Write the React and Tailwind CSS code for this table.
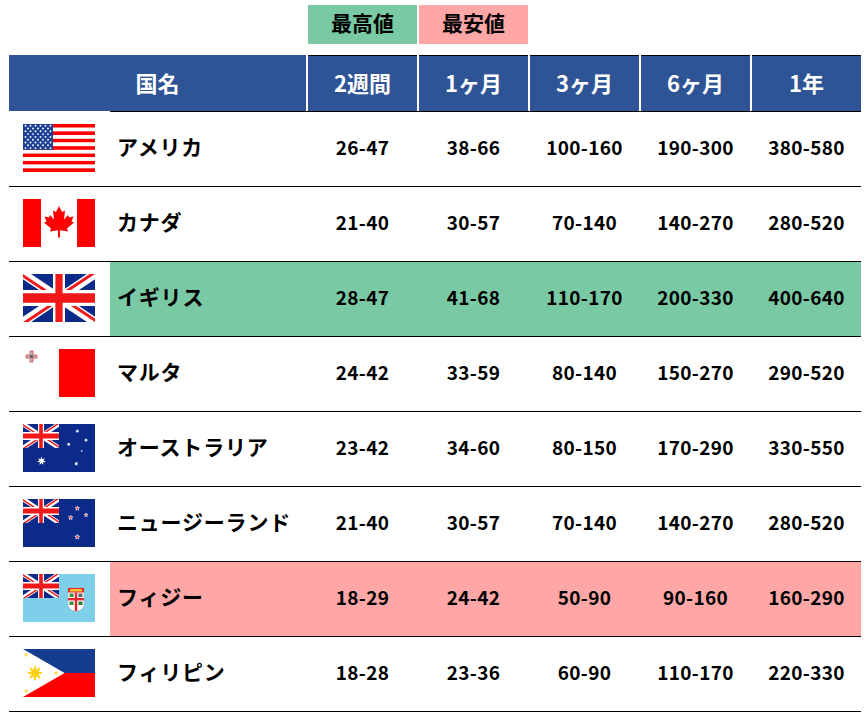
import React from 'react';

const GREEN = 'bg-[#79C9A5]';
const PINK = 'bg-[#FFA6A6]';

const headers = ['2週間', '1ヶ月', '3ヶ月', '6ヶ月', '1年'];

const rows = [
  { name: 'アメリカ', flag: 'us', v: ['26-47', '38-66', '100-160', '190-300', '380-580'] },
  { name: 'カナダ', flag: 'ca', v: ['21-40', '30-57', '70-140', '140-270', '280-520'] },
  { name: 'イギリス', flag: 'uk', v: ['28-47', '41-68', '110-170', '200-330', '400-640'], hl: GREEN },
  { name: 'マルタ', flag: 'mt', v: ['24-42', '33-59', '80-140', '150-270', '290-520'] },
  { name: 'オーストラリア', flag: 'au', v: ['23-42', '34-60', '80-150', '170-290', '330-550'] },
  { name: 'ニュージーランド', flag: 'nz', v: ['21-40', '30-57', '70-140', '140-270', '280-520'] },
  { name: 'フィジー', flag: 'fj', v: ['18-29', '24-42', '50-90', '90-160', '160-290'], hl: PINK },
  { name: 'フィリピン', flag: 'ph', v: ['18-28', '23-36', '60-90', '110-170', '220-330'] },
];

// star polygon points
function star(cx, cy, r, n = 5, inner = 0.42) {
  const pts = [];
  for (let i = 0; i < n * 2; i++) {
    const rr = i % 2 === 0 ? r : r * inner;
    const a = (Math.PI * i) / n - Math.PI / 2;
    pts.push(`${(cx + rr * Math.cos(a)).toFixed(2)},${(cy + rr * Math.sin(a)).toFixed(2)}`);
  }
  return pts.join(' ');
}

// union jack drawn into a box (x, y, w, h)
function UnionJack({ id, x = 0, y = 0, w = 72, h = 48 }) {
  return (
    <svg x={x} y={y} width={w} height={h} viewBox="0 0 60 30" preserveAspectRatio="none">
      <clipPath id={`t-${id}`}>
        <path d="M30,15 h30 v15 z v15 h-30 z h-30 v-15 z v-15 h30 z" />
      </clipPath>
      <rect width="60" height="30" fill="#0B2A8A" />
      <path d="M0,0 L60,30 M60,0 L0,30" stroke="#fff" strokeWidth="6" />
      <path d="M0,0 L60,30 M60,0 L0,30" clipPath={`url(#t-${id})`} stroke="#F01818" strokeWidth="4" />
      <path d="M30,0 v30 M0,15 h60" stroke="#fff" strokeWidth="10" />
      <path d="M30,0 v30 M0,15 h60" stroke="#F01818" strokeWidth="6" />
    </svg>
  );
}

function Flag({ code }) {
  const common = { width: 72, height: 48, viewBox: '0 0 72 48' };

  if (code === 'us') {
    const stripes = [];
    for (let i = 0; i < 13; i++) {
      stripes.push(
        <rect key={i} y={(48 / 13) * i} width="72" height={48 / 13 + 0.05} fill={i % 2 === 0 ? '#FF0000' : '#fff'} />
      );
    }
    const stars = [];
    for (let r = 0; r < 9; r++) {
      const n = r % 2 === 0 ? 6 : 5;
      for (let c = 0; c < n; c++) {
        const cx = r % 2 === 0 ? 2.5 + c * 5 : 5 + c * 5;
        stars.push(<circle key={`${r}-${c}`} cx={cx} cy={1.7 + r * 2.8} r="0.95" fill="#fff" />);
      }
    }
    return (
      <svg {...common}>
        {stripes}
        <rect width="30" height={(48 / 13) * 7} fill="#1C3F94" />
        {stars}
      </svg>
    );
  }

  if (code === 'ca') {
    const leaf = [
      [0, -17], [3, -11], [6, -12.5], [5, -3.5], [9, -8], [10, -5.5], [14.5, -6.5], [12.5, -1.5], [15, -0.5],
      [8, 5.5], [9, 8.5], [1, 7.2], [1, 14.5], [-1, 14.5], [-1, 7.2], [-9, 8.5], [-8, 5.5], [-15, -0.5],
      [-12.5, -1.5], [-14.5, -6.5], [-10, -5.5], [-9, -8], [-5, -3.5], [-6, -12.5], [-3, -11],
    ].map(([a, b]) => `${36 + a},${24 + b}`).join(' ');
    return (
      <svg {...common}>
        <rect width="72" height="48" fill="#fff" />
        <rect width="18" height="48" fill="#FF0000" />
        <rect x="54" width="18" height="48" fill="#FF0000" />
        <polygon points={leaf} fill="#FF0000" />
      </svg>
    );
  }

  if (code === 'uk') {
    return (
      <svg {...common}>
        <UnionJack id="uk" />
      </svg>
    );
  }

  if (code === 'mt') {
    return (
      <svg {...common}>
        <rect width="72" height="48" fill="#fff" />
        <rect x="36" width="36" height="48" fill="#FF0000" />
        <path d="M7,2 h3 v4 h4 v3 h-4 v4 h-3 v-4 h-4 v-3 h4 z" fill="#B8B8B8" stroke="#D44" strokeWidth="0.8" />
        <circle cx="8.5" cy="7.5" r="1.6" fill="#555" />
      </svg>
    );
  }

  if (code === 'au') {
    return (
      <svg {...common}>
        <rect width="72" height="48" fill="#0B2A8A" />
        <UnionJack id="au" w={36} h={24} />
        <polygon points={star(18.5, 37, 4.5, 7, 0.45)} fill="#fff" />
        <polygon points={star(54.3, 7, 2.1, 7, 0.45)} fill="#fff" />
        <polygon points={star(63, 16, 2.1, 7, 0.45)} fill="#fff" />
        <polygon points={star(45.7, 20.3, 2.1, 7, 0.45)} fill="#fff" />
        <polygon points={star(58.7, 27, 1.2, 5, 0.45)} fill="#fff" />
        <polygon points={star(53.3, 39.7, 2.2, 7, 0.45)} fill="#fff" />
      </svg>
    );
  }

  if (code === 'nz') {
    const s = [[54.3, 9.3, 2.3], [63, 16, 2], [47.7, 18.7, 2.3], [54.3, 38, 2.5]];
    return (
      <svg {...common}>
        <rect width="72" height="48" fill="#0B2A8A" />
        <UnionJack id="nz" w={36} h={24} />
        {s.map(([x, y, r], i) => (
          <polygon key={i} points={star(x, y, r)} fill="#E8242C" stroke="#fff" strokeWidth="0.7" />
        ))}
      </svg>
    );
  }

  if (code === 'fj') {
    return (
      <svg {...common}>
        <rect width="72" height="48" fill="#7ECFEA" />
        <UnionJack id="fj" w={36} h={24} />
        <path d="M45,14 H61 V30 Q61,36 53,37.5 Q45,36 45,30 Z" fill="#fff" stroke="#999" strokeWidth="0.4" />
        <rect x="45" y="14" width="16" height="4.5" fill="#E8242C" />
        <rect x="47" y="15" width="12" height="2.5" fill="#F2C230" />
        <rect x="51.8" y="18.5" width="2.4" height="18.5" fill="#E8242C" />
        <rect x="45" y="24" width="16" height="2.4" fill="#E8242C" />
        <rect x="46.5" y="19.5" width="4" height="3.5" fill="#3D8F3D" />
        <rect x="55.5" y="19.5" width="4" height="3.5" fill="#666" />
        <rect x="46.5" y="27.5" width="4" height="3.5" fill="#3D8F3D" />
        <rect x="55.5" y="27.5" width="4" height="3.5" fill="#2F7A2F" />
      </svg>
    );
  }

  if (code === 'ph') {
    const rays = [];
    for (let i = 0; i < 8; i++) {
      const a = (Math.PI * i) / 4;
      rays.push(
        <line
          key={i}
          x1={12 + 3.5 * Math.cos(a)}
          y1={24 + 3.5 * Math.sin(a)}
          x2={12 + 7 * Math.cos(a)}
          y2={24 + 7 * Math.sin(a)}
          stroke="#FCD116"
          strokeWidth="2"
        />
      );
    }
    return (
      <svg {...common}>
        <rect width="72" height="24" fill="#143C8F" />
        <rect y="24" width="72" height="24" fill="#FF0000" />
        <polygon points="0,0 41.6,24 0,48" fill="#fff" />
        {rays}
        <circle cx="12" cy="24" r="4" fill="#FCD116" />
        <polygon points={star(3, 6, 2.2)} fill="#FCD116" />
        <polygon points={star(3, 42, 2.2)} fill="#FCD116" />
        <polygon points={star(33, 24, 2.2)} fill="#FCD116" />
      </svg>
    );
  }

  return null;
}

export default function App() {
  return (
    <div className="min-h-screen bg-white pl-[9px] pt-[5px] font-['Noto_Sans_CJK_JP','Noto_Sans',sans-serif] text-black">
      {/* legend */}
      <div className="flex gap-[2px] pl-[299px]">
        <div className={`${GREEN} flex h-[39px] w-[109px] items-center justify-center pb-[3px] text-[21px] font-bold`}>最高値</div>
        <div className={`${PINK} flex h-[39px] w-[109px] items-center justify-center pb-[3px] text-[21px] font-bold`}>最安値</div>
      </div>

      {/* header */}
      <div className="mt-[11px] flex h-[56px] w-[852px]">
        <div className="flex w-[297px] items-center justify-center bg-[#2F5496] pb-[2px] text-[22px] font-bold text-white">国名</div>
        {headers.map(h => (
          <div
            key={h}
            className="ml-[2px] flex w-[109px] items-center justify-center border-t border-black bg-[#2F5496] pb-[2px] text-[22px] font-bold text-white"
          >
            {h}
          </div>
        ))}
      </div>
      <div className="ml-[101px] h-px w-[751px] bg-black" />

      {/* rows */}
      {rows.map(r => (
        <div key={r.name} className="flex h-[75px] w-[852px] border-b border-black">
          <div className="flex w-[101px] items-center pb-[3px] pl-[14px]">
            <Flag code={r.flag} />
          </div>
          <div className={`flex flex-1 items-center pb-[4px] ${r.hl || ''}`}>
            <div className="w-[196px] pl-[7px] text-[21px] font-bold tracking-[0.8px]">{r.name}</div>
            {r.v.map((x, i) => (
              <div key={i} className="w-[111px] pl-[2px] text-center text-[19px] font-bold tracking-[0.3px]">
                {x}
              </div>
            ))}
          </div>
        </div>
      ))}
    </div>
  );
}
